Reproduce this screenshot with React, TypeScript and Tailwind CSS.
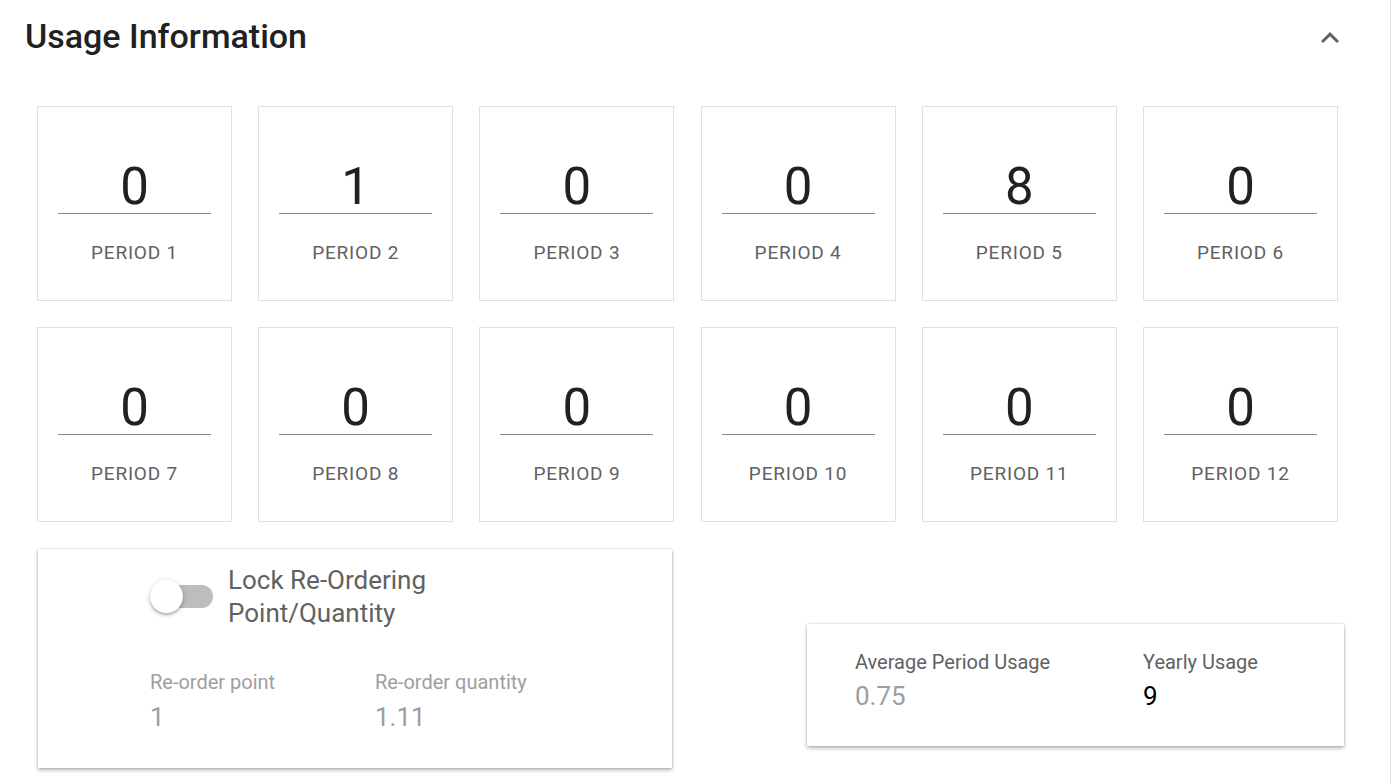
import React from "react";

const periods = [0, 1, 0, 0, 8, 0, 0, 0, 0, 0, 0, 0];

function PeriodCard({ value, label }: { value: number; label: string }) {
  return (
    <div className="h-[195px] border border-[#e0e0e0] bg-white flex flex-col items-stretch pt-[54px] px-[20px]">
      <div className="h-[53px] leading-[52px] text-[51px] text-center text-[#212121] border-b border-[#8a8a8a]">
        {value}
      </div>
      <div className="mt-[27px] text-[19px] leading-[24px] tracking-[0.8px] text-center text-[#616161]">
        {label}
      </div>
    </div>
  );
}

function Toggle() {
  return (
    <div className="relative w-[64px] h-[34px] shrink-0">
      <div className="absolute left-[7px] top-[5px] w-[56px] h-[23px] rounded-full bg-[#bdbdbd]" />
      <div className="absolute left-0 top-0 w-[33px] h-[33px] rounded-full bg-white shadow-[0_2px_3px_rgba(0,0,0,0.25),0_1px_6px_rgba(0,0,0,0.15)]" />
    </div>
  );
}

export default function App() {
  return (
    <div className="w-[1392px] h-[784px] bg-white overflow-hidden font-['Roboto',sans-serif]">
      <div className="w-[1391px] h-full border-r border-[#e0e0e0]">
        <div className="flex items-start justify-between pl-[25px] pr-[42px] pt-[16px]">
          <h1 className="text-[34px] leading-[40px] font-medium text-[#212121]">Usage Information</h1>
          <svg className="mt-[4px] w-[36px] h-[36px]" viewBox="0 0 24 24" fill="#616161">
            <path d="M12 8l-6 6 1.41 1.41L12 10.83l4.59 4.58L18 14z" />
          </svg>
        </div>

        <div className="ml-[37px] mt-[50px] w-[1301px] grid grid-cols-6 gap-x-[26.2px] gap-y-[26px]">
          {periods.map((v, i) => (
            <PeriodCard key={i} value={v} label={`PERIOD ${i + 1}`} />
          ))}
        </div>

        <div className="flex items-start mt-[27px] ml-[38px]">
          <div className="w-[634px] h-[219px] bg-white shadow-[0_2px_4px_rgba(0,0,0,0.3),0_0_2px_rgba(0,0,0,0.15)] pl-[112px] pt-[15px]">
            <div className="flex items-center gap-[14px]">
              <Toggle />
              <div className="text-[26px] leading-[33px] text-[#616161]">
                Lock Re-Ordering
                <br />
                Point/Quantity
              </div>
            </div>
            <div className="flex mt-[40px]">
              <div className="w-[225px]">
                <div className="text-[20px] leading-[24px] text-[#9e9e9e]">Re-order point</div>
                <div className="mt-[7px] text-[26px] leading-[32px] text-[#9e9e9e]">1</div>
              </div>
              <div>
                <div className="text-[20px] leading-[24px] text-[#9e9e9e]">Re-order quantity</div>
                <div className="mt-[7px] text-[26px] leading-[32px] text-[#9e9e9e]">1.11</div>
              </div>
            </div>
          </div>

          <div className="ml-[135px] mt-[75px] w-[537px] h-[122px] bg-white shadow-[0_2px_4px_rgba(0,0,0,0.3),0_0_2px_rgba(0,0,0,0.15)] pl-[48px] pt-[26px] flex">
            <div className="w-[288px]">
              <div className="text-[20px] leading-[24px] text-[#616161]">Average Period Usage</div>
              <div className="mt-[6px] text-[26px] leading-[32px] text-[#9e9e9e]">0.75</div>
            </div>
            <div>
              <div className="text-[20px] leading-[24px] text-[#616161]">Yearly Usage</div>
              <div className="mt-[6px] text-[26px] leading-[32px] text-black">9</div>
            </div>
          </div>
        </div>
      </div>
    </div>
  );
}
